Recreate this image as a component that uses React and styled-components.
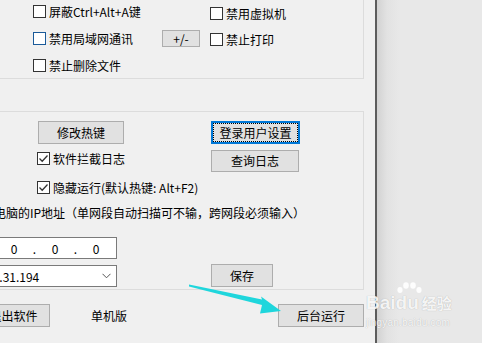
import React from "react";
import styled, { createGlobalStyle } from "styled-components";

const GlobalStyle = createGlobalStyle`
  html, body { margin: 0; padding: 0; }
  body {
    font-family: "Noto Sans CJK SC", "Noto Sans", sans-serif;
    font-size: 12px;
    color: #000;
    background: #e8e8e8;
  }
`;

const Screen = styled.div`
  position: relative;
  display: flex;
  width: 482px;
  height: 343px;
  overflow: hidden;
`;

const Window = styled.div`
  flex: none;
  box-sizing: border-box;
  width: 377px;
  height: 100%;
  border-right: 2px solid #5c5c5c;
  background: #f0f0f0;
  overflow: hidden;
  display: flex;
  flex-direction: column;
`;

const Desktop = styled.div`
  flex: 1;
  background: linear-gradient(to right, #d2d2d2, #e2e2e2 10px, #e8e8e8 22px);
`;

const GroupBox = styled.div`
  flex: none;
  box-sizing: border-box;
  width: 374px;
  height: ${(p) => p.$h}px;
  margin: ${(p) => p.$top}px 0 0 -10px;
  border: 1px solid #dcdcdc;
`;

const OptionGrid = styled.div`
  display: grid;
  grid-template-columns: 129px 48px auto;
  grid-auto-rows: 27px;
  align-items: center;
  padding: 7px 0 0 42px;
`;

const CheckLabel = styled.label`
  display: flex;
  align-items: center;
  gap: 3px;
  height: 17px;
  white-space: nowrap;
  margin-top: ${(p) => p.$dy || 0}px;
  margin-left: ${(p) => p.$left || 0}px;
  align-self: ${(p) => (p.$start ? "start" : "auto")};
`;

const Box = styled.span`
  flex: none;
  box-sizing: border-box;
  width: 13px;
  height: 13px;
  border: 1px solid ${(p) => (p.$hover ? "#1a5a99" : "#333")};
  background: #fff;
  display: flex;
  align-items: center;
  justify-content: center;
`;

const Btn = styled.button`
  box-sizing: border-box;
  width: ${(p) => p.$w}px;
  height: ${(p) => p.$h || 23}px;
  margin-left: ${(p) => p.$left || 0}px;
  margin-top: ${(p) => p.$top || 0}px;
  padding: 0;
  border: 1px solid #adadad;
  background: #e1e1e1;
  color: #000;
  font: inherit;
  line-height: 1;
  white-space: nowrap;
  &.focused {
    border: 2px solid #0078d7;
    outline: 1px dotted #000;
    outline-offset: -3px;
  }
`;

const Panel = styled.div`
  display: flex;
  flex-direction: column;
  padding-top: 9px;
`;

const TwoCol = styled.div`
  display: grid;
  grid-template-columns: 220px auto;
  align-items: start;
  margin-top: ${(p) => p.$top || 0}px;
`;

const Hint = styled.div`
  margin: 9px 0 0 3px;
  line-height: 16px;
  white-space: nowrap;
`;

const IpBox = styled.div`
  box-sizing: border-box;
  display: flex;
  justify-content: flex-end;
  align-items: center;
  width: 162px;
  height: 22px;
  margin: 16px 0 0 -36px;
  padding-right: 6px;
  border: 1px solid #7a7a7a;
  background: #fff;
`;

const Octet = styled.span`
  width: ${(p) => (p.$dot ? 13 : 28)}px;
  text-align: center;
`;

const Combo = styled.div`
  box-sizing: border-box;
  display: flex;
  align-items: center;
  width: 165px;
  height: 22px;
  margin: 1px 0 0 -39px;
  padding: 0 5px 0 3px;
  border: 1px solid #7a7a7a;
  background: #fff;
  span { flex: 1; white-space: nowrap; }
`;

const BottomRow = styled.div`
  display: flex;
  align-items: center;
  height: 23px;
  margin-top: 14px;
`;

const Edition = styled.span`
  width: 36px;
  margin-left: 41px;
  white-space: nowrap;
`;

const Overlay = styled.svg`
  position: absolute;
  left: 0;
  top: 0;
  pointer-events: none;
`;

const Watermark = styled.div`
  position: absolute;
  left: 366px;
  top: 284px;
  color: rgba(255, 255, 255, 0.9);
  text-shadow: 0 0 1px rgba(0, 0, 0, 0.28);
  pointer-events: none;
`;

const MarkTop = styled.div`
  display: flex;
  align-items: flex-end;
  font-family: "Liberation Sans", sans-serif;
  font-weight: bold;
  font-size: 19px;
  line-height: 22px;
  .cn {
    font-family: "Noto Sans CJK SC", sans-serif;
    font-size: 15px;
    margin-left: 3px;
  }
`;

const Paw = styled.span`
  position: relative;
  display: inline-block;
  padding-top: 8px;
  svg { position: absolute; left: 0; top: -2px; }
`;

const MarkSub = styled.div`
  font-family: "Liberation Sans", sans-serif;
  font-size: 10px;
  margin-top: 3px;
  letter-spacing: 0.2px;
`;

const Check = ({ label, checked, hover, ...rest }) => (
  <CheckLabel {...rest}>
    <Box $hover={hover}>
      {checked && (
        <svg width="11" height="11" viewBox="0 0 11 11">
          <polyline points="1.5,5.5 4.2,8.2 9.5,2.5" fill="none" stroke="#333" strokeWidth="1.3" />
        </svg>
      )}
    </Box>
    <span>{label}</span>
  </CheckLabel>
);

export default function App() {
  return (
    <>
      <GlobalStyle />
      <Screen>
        <Window>
          <GroupBox $top={-10} $h={89}>
            <OptionGrid>
              <Check label="屏蔽Ctrl+Alt+A键" />
              <span />
              <Check label="禁用虚拟机" $dy={3} />
              <Check label="禁用局域网通讯" hover />
              <Btn $w={38} $h={17}>+/-</Btn>
              <Check label="禁止打印" $dy={1} />
              <Check label="禁止删除文件" />
            </OptionGrid>
          </GroupBox>

          <GroupBox $top={32} $h={179}>
            <Panel>
              <TwoCol>
                <Btn $w={86} $left={47}>修改热键</Btn>
                <Btn $w={89} className="focused">登录用户设置</Btn>
              </TwoCol>
              <TwoCol $top={6}>
                <Check label="软件拦截日志" checked $left={46} $start />
                <Btn $w={88} $h={22}>查询日志</Btn>
              </TwoCol>
              <TwoCol $top={7}>
                <Check label="隐藏运行(默认热键: Alt+F2)" checked $left={46} />
              </TwoCol>
              <Hint>电脑的IP地址（单网段自动扫描可不输，跨网段必须输入）</Hint>
              <IpBox>
                <Octet>0</Octet>
                <Octet $dot>.</Octet>
                <Octet>0</Octet>
                <Octet $dot>.</Octet>
                <Octet>0</Octet>
                <Octet $dot>.</Octet>
                <Octet>0</Octet>
              </IpBox>
              <TwoCol $top={5}>
                <Combo>
                  <span>192.168.31.194</span>
                  <svg width="9" height="6" viewBox="0 0 9 6">
                    <polyline points="0.5,0.8 4.5,4.8 8.5,0.8" fill="none" stroke="#555" strokeWidth="1" />
                  </svg>
                </Combo>
                <Btn $w={62}>保存</Btn>
              </TwoCol>
            </Panel>
          </GroupBox>

          <BottomRow>
            <Btn $w={73} $left={-23}>退出软件</Btn>
            <Edition>单机版</Edition>
            <Btn $w={86} $left={151}>后台运行</Btn>
          </BottomRow>
        </Window>
        <Desktop />

        <Overlay width="482" height="343" viewBox="0 0 482 343">
          <polygon
            points="189,284.6 262,299.5 261,296.5 281,311 260,313.5 262,305 189,286.6"
            fill="#1fd6dc"
          />
        </Overlay>

        <Watermark>
          <MarkTop>
            <span>Bai</span>
            <Paw>
              <svg width="28" height="12" viewBox="0 0 28 12">
                <ellipse cx="4" cy="8" rx="2.6" ry="3" fill="rgba(255,255,255,0.9)" />
                <ellipse cx="10" cy="3.5" rx="2.8" ry="3.2" fill="rgba(255,255,255,0.9)" />
                <ellipse cx="17" cy="3.5" rx="2.8" ry="3.2" fill="rgba(255,255,255,0.9)" />
                <ellipse cx="23" cy="8" rx="2.6" ry="3" fill="rgba(255,255,255,0.9)" />
              </svg>
              du
            </Paw>
            <span className="cn">经验</span>
          </MarkTop>
          <MarkSub>jingyan.baidu.com</MarkSub>
        </Watermark>
      </Screen>
    </>
  );
}
